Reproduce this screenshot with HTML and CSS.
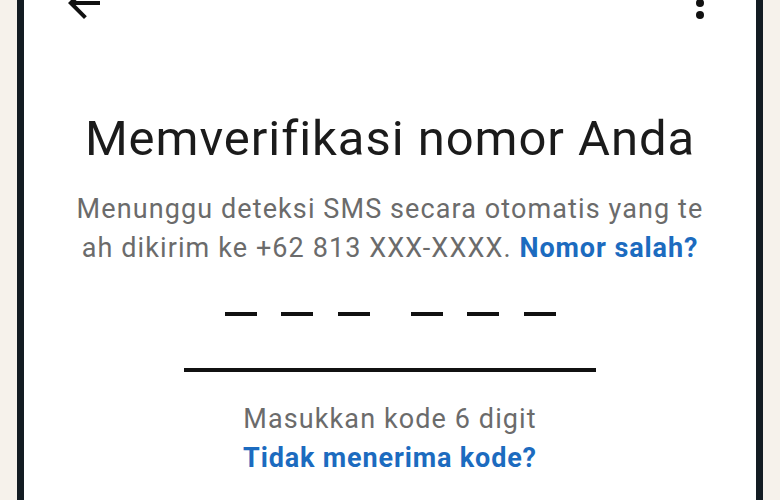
FILE: index.html
```html
<!DOCTYPE html>
<html>
<head>
<meta charset="UTF-8">
<title>Memverifikasi nomor Anda</title>
<link rel="stylesheet" href="styles.css">
</head>
<body>
<div class="phone">
  <div class="topbar">
    <svg class="icon" viewBox="0 0 24 24"><path d="M20 11H7.83l5.59-5.59L12 4l-8 8 8 8 1.41-1.41L7.83 13H20v-2z"/></svg>
    <svg class="icon" viewBox="0 0 24 24"><circle cx="12" cy="6" r="2"/><circle cx="12" cy="12" r="2"/><circle cx="12" cy="18" r="2"/></svg>
  </div>

  <h1 class="title">Memverifikasi nomor Anda</h1>
  <p class="lead">Menunggu deteksi SMS secara otomatis yang te<br>ah dikirim ke +62 813 XXX-XXXX. <a class="link" href="#">Nomor salah?</a></p>

  <div class="code">
    <div class="group"><span class="dash"></span><span class="dash"></span><span class="dash"></span></div>
    <div class="group"><span class="dash"></span><span class="dash"></span><span class="dash"></span></div>
  </div>
  <div class="field-line"></div>

  <p class="hint">Masukkan kode 6 digit</p>
  <a class="link resend" href="#">Tidak menerima kode?</a>
</div>
</body>
</html>
```

FILE: styles.css
```css
html, body {
  margin: 0;
  height: 100%;
}
body {
  background-color: #f6f2eb;
  font-family: Roboto, "Noto Sans", sans-serif;
  overflow: hidden;
}
.phone {
  margin: 0 17px;
  height: 100%;
  background-color: #fff;
  border-left: 7px solid #131c22;
  border-right: 7px solid #131c22;
  display: flex;
  flex-direction: column;
  align-items: center;
}
.topbar {
  align-self: stretch;
  display: flex;
  justify-content: space-between;
  margin-top: -21px;
  padding: 0 32px 0 36px;
}
.icon {
  width: 48px;
  height: 48px;
  fill: #111;
}
.title {
  margin: 84px 0 0;
  font-size: 49px;
  line-height: 56px;
  font-weight: 400;
  letter-spacing: 0.95px;
  color: #1b1b1b;
}
.lead {
  margin: 23px 0 0;
  font-size: 27px;
  line-height: 39px;
  letter-spacing: 1.1px;
  color: #6b6b6b;
  text-align: center;
}
.link {
  color: #1c6bbf;
  font-weight: 700;
  text-decoration: none;
}
.lead .link {
  letter-spacing: 0.9px;
}
.code {
  margin-top: 44px;
  display: flex;
  gap: 41px;
}
.group {
  display: flex;
  gap: 24.5px;
}
.dash {
  width: 32px;
  height: 4px;
  background-color: #111;
}
.field-line {
  margin-top: 52px;
  width: 412px;
  height: 4px;
  background-color: #111;
}
.hint {
  margin: 28px 0 0;
  font-size: 27px;
  line-height: 39px;
  letter-spacing: 1.1px;
  color: #6b6b6b;
}
.resend {
  font-size: 27px;
  line-height: 39px;
  letter-spacing: 0.85px;
}
```
